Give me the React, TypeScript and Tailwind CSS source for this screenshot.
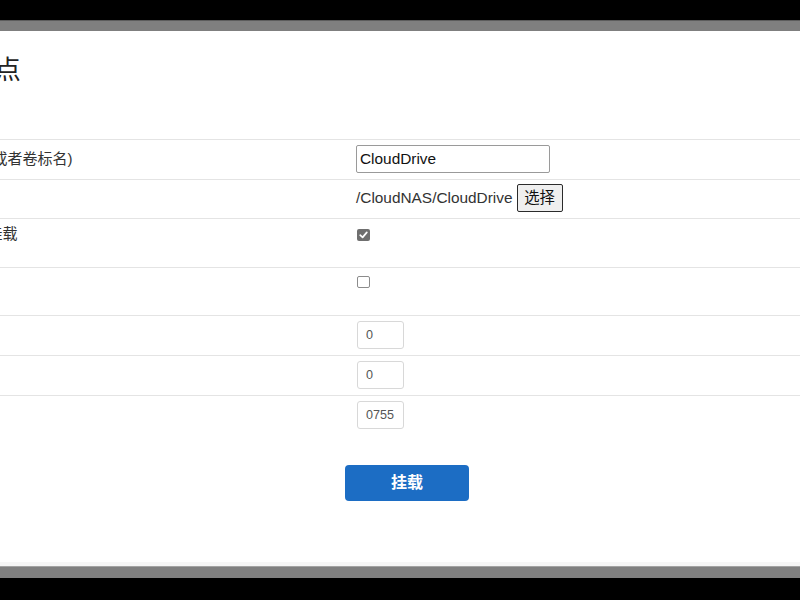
import React from "react";

function CheckBox({ checked }: { checked: boolean }) {
  if (checked) {
    return (
      <div className="ml-[1px] w-[13px] h-[12px] rounded-[2px] bg-[#6f6f6f] flex items-center justify-center">
        <svg width="9" height="8" viewBox="0 0 9 8">
          <path d="M1.2 4.2 L3.6 6.4 L7.8 1.4" stroke="white" strokeWidth="1.7" fill="none" strokeLinecap="round" strokeLinejoin="round" />
        </svg>
      </div>
    );
  }
  return <div className="ml-[1px] w-[13px] h-[12px] rounded-[2px] border border-[#8c8c8c] bg-white" />;
}

function NumInput({ value }: { value: string }) {
  return (
    <input
      readOnly
      defaultValue={value}
      className="ml-[1px] w-[47px] h-[28px] border border-[#d8d8d8] rounded-[3px] pl-[8px] text-[12.6px] text-[#555] outline-none bg-white"
    />
  );
}

const label = "w-[398.5px] shrink-0 text-[15px] leading-[20px] text-[#333] whitespace-nowrap";

export default function App() {
  return (
    <div className="w-[800px] h-[600px] flex flex-col bg-black font-['Liberation_Sans','Noto_Sans_CJK_SC',sans-serif]">
      <div className="h-[20px] bg-black" />
      <div className="h-[11px] bg-[#7f7f7f] border-t border-[#5c5c5c]" />
      <div className="h-[531px] bg-white overflow-hidden">
        <div className="ml-[-42.5px] w-[900px]">
          <h1 className="ml-[-66.7px] mt-[21px] text-[26px] leading-[36px] text-[#222] font-normal whitespace-nowrap">
            添加挂载点
          </h1>
          <div className="mt-[51px]">
            <div className="flex items-baseline h-[40px] border-t border-[#e4e4e4] pt-[5px]">
              <div className={label}>名称(或者卷标名)</div>
              <input
                readOnly
                defaultValue="CloudDrive"
                className="w-[194px] h-[28px] border border-[#9a9a9a] rounded-[2px] pl-[3px] text-[15.4px] text-[#111] outline-none bg-white"
              />
            </div>
            <div className="flex items-start h-[39px] border-t border-[#e4e4e4] pt-[4px]">
              <div className={label + " mt-[4px]"}>路径</div>
              <div className="flex items-center">
                <span className="text-[15.4px] leading-[28px] text-[#333]">/CloudNAS/CloudDrive</span>
                <button className="ml-[4px] h-[28px] w-[46px] flex items-center justify-center border border-[#2b2b2b] bg-[#efefef] rounded-[2px] text-[15.4px] text-[#111]">
                  选择
                </button>
              </div>
            </div>
            <div className="flex items-start h-[49px] border-t border-[#e4e4e4] pt-[5px]">
              <div className={label}>自动挂载</div>
              <div className="mt-[5px]">
                <CheckBox checked />
              </div>
            </div>
            <div className="flex items-start h-[48px] border-t border-[#e4e4e4] pt-[5px]">
              <div className={label}>只读</div>
              <div className="mt-[3px]">
                <CheckBox checked={false} />
              </div>
            </div>
            <div className="flex items-start h-[40px] border-t border-[#e4e4e4] pt-[5px]">
              <div className={label + " mt-[4px]"}>UID</div>
              <NumInput value="0" />
            </div>
            <div className="flex items-start h-[40px] border-t border-[#e4e4e4] pt-[5px]">
              <div className={label + " mt-[4px]"}>GID</div>
              <NumInput value="0" />
            </div>
            <div className="flex items-start h-[40px] border-t border-[#e4e4e4] pt-[5px]">
              <div className={label + " mt-[4px]"}>权限</div>
              <NumInput value="0755" />
            </div>
          </div>
          <div className="mt-[30px] pl-[387.5px]">
            <button className="w-[124px] h-[36px] rounded-[4px] bg-[#1c6dc4] text-white text-[16px] font-bold flex items-center justify-center">
              挂载
            </button>
          </div>
        </div>
      </div>
      <div className="h-[4px] bg-[#f6f6f6]" />
      <div className="h-[12px] bg-[#808080] border-t border-[#a3a3a3]" />
      <div className="h-[22px] bg-black" />
    </div>
  );
}
